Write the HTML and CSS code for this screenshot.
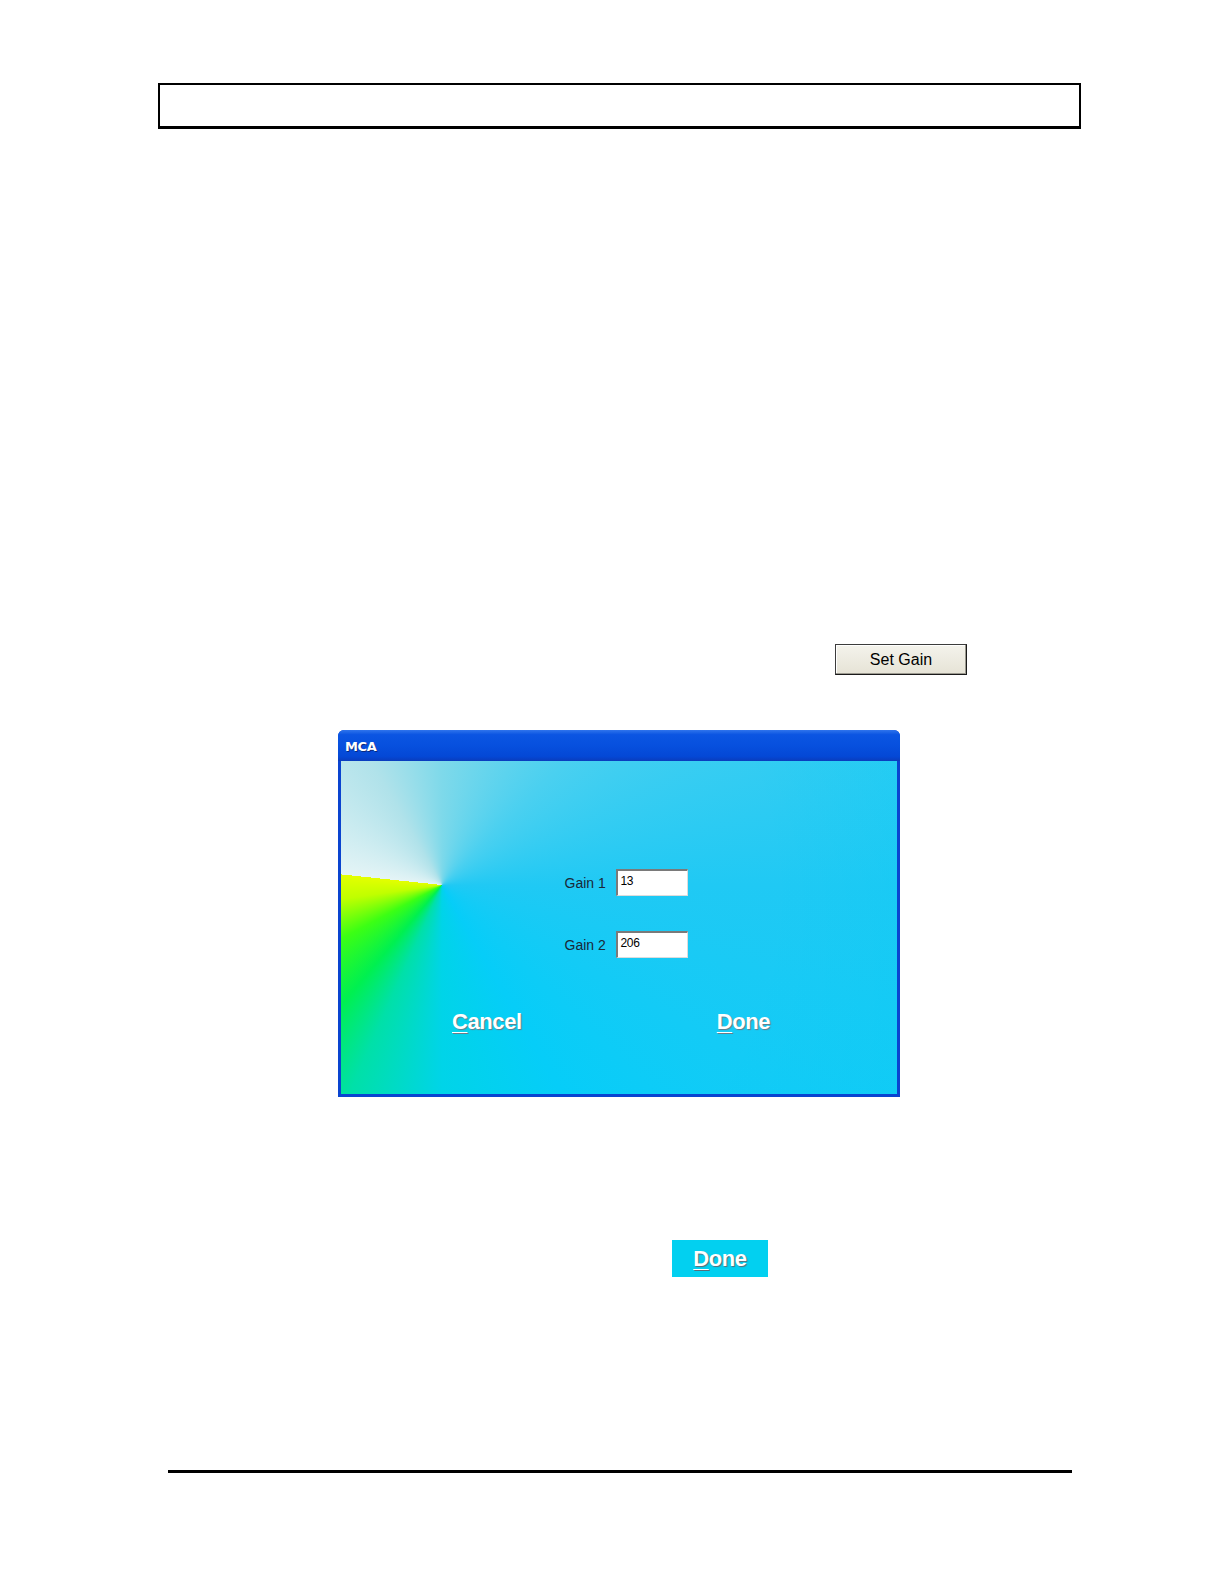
FILE: index.html
```html
<!DOCTYPE html>
<html>
<head>
<meta charset="utf-8">
<link rel="stylesheet" href="styles.css">
</head>
<body>
<div class="page">
  <div class="header-box"></div>
  <div class="setgain-row"><button class="setgain">Set Gain</button></div>
  <div class="dialog">
    <div class="titlebar">MCA</div>
    <div class="dlg-body">
      <div class="fields">
        <div class="field"><span class="lbl">Gain 1</span><span class="inp">13</span></div>
        <div class="field"><span class="lbl">Gain 2</span><span class="inp">206</span></div>
      </div>
      <div class="actions">
        <span class="act act-cancel"><u>C</u>ancel</span>
        <span class="act act-done"><u>D</u>one</span>
      </div>
    </div>
  </div>
  <div class="done-row"><span class="done-btn"><u>D</u>one</span></div>
  <div class="footer-line"></div>
</div>
</body>
</html>
```
FILE: styles.css
```css
html, body {
  margin: 0;
  padding: 0;
  background: #fff;
  overflow: hidden;
  font-family: "Liberation Sans", Arial, sans-serif;
}
.page {
  padding-top: 83px;
}
.header-box {
  margin-left: 158px;
  width: 923px;
  height: 46px;
  box-sizing: border-box;
  border: 2px solid #000;
  border-bottom-width: 3px;
}
.setgain-row {
  margin-top: 515px;
  padding-left: 835px;
  height: 31px;
}
.setgain {
  display: block;
  width: 132px;
  height: 31px;
  box-sizing: border-box;
  border: 1px solid #3c3c3c;
  border-right-color: #1a1a1a;
  border-bottom-color: #1a1a1a;
  box-shadow: inset -1px -1px 0 #9c9a90, inset 1px 1px 0 #fff;
  background: linear-gradient(#f4f3ec, #e6e3d6);
  font-family: "Liberation Sans", Arial, sans-serif;
  font-size: 16px;
  color: #000;
  padding: 0;
}
.dialog {
  margin-top: 55px;
  margin-left: 338px;
  width: 562px;
  height: 367px;
  box-sizing: border-box;
  display: flex;
  flex-direction: column;
  background: #0a44d0;
  border-radius: 6px 6px 0 0;
  padding: 0 3px 3px 3px;
}
.titlebar {
  height: 31px;
  flex: none;
  margin: 0 -3px;
  padding-left: 7px;
  border-radius: 6px 6px 0 0;
  background: linear-gradient(#2f74ec 0%, #0b55e2 15%, #0750de 50%, #0448d6 85%, #0a3cbd 100%);
  color: #fff;
  font-family: "DejaVu Sans", sans-serif;
  font-weight: bold;
  font-size: 13px;
  line-height: 34px;
  letter-spacing: -0.4px;
  text-shadow: 1px 1px 0 #0a2a80;
}
.dlg-body {
  flex: 1;
  display: flex;
  flex-direction: column;
  align-items: center;
  background:
    radial-gradient(circle at 101px 124px, rgba(0,205,245,0) 0, rgba(0,205,245,0) 330px, rgba(0,205,245,0.35) 560px),
    conic-gradient(from 276deg at 101px 124px,
      #e4f4f6 0deg,
      #b0e2ea 54deg,
      #7ed9ea 84deg,
      #4ad0f0 129deg,
      #20c9f4 174deg,
      #06cdf8 234deg,
      #00d4e8 264deg,
      #00e0a8 288deg,
      #00f050 304deg,
      #3cff14 326deg,
      #c0ff00 346deg,
      #e4ff00 360deg);
}
.fields {
  margin-top: 108px;
  margin-left: 14px;
  display: flex;
  flex-direction: column;
  gap: 35px;
}
.field {
  display: flex;
  align-items: center;
  gap: 10px;
}
.lbl {
  font-size: 14px;
  color: #1a2838;
  width: 41px;
  white-space: nowrap;
  text-align: left;
}
.inp {
  width: 72px;
  height: 27px;
  box-sizing: border-box;
  background: #fff;
  border-top: 2px solid #7a7a7a;
  border-left: 2px solid #7a7a7a;
  border-right: 1px solid #dcdcdc;
  border-bottom: 1px solid #dcdcdc;
  font-size: 12px;
  letter-spacing: -0.3px;
  color: #000;
  padding: 3px 0 0 3px;
}
.actions {
  margin-top: 51px;
  width: 100%;
  display: flex;
}
.act {
  font-size: 22px;
  font-weight: bold;
  color: #fff;
  letter-spacing: -0.4px;
  text-shadow: 1px 1px 1px #6a7c88;
}
.act u {
  text-decoration-thickness: 1px;
  text-underline-offset: 3px;
}
.act-cancel { margin-left: 111px; }
.act-done { margin-left: 195px; }
.done-row {
  margin-top: 143px;
  padding-left: 672px;
}
.done-btn {
  display: flex;
  align-items: center;
  justify-content: center;
  width: 96px;
  height: 37px;
  background: #02d0f0;
  font-size: 22px;
  font-weight: bold;
  letter-spacing: -0.4px;
  color: #fff;
  text-shadow: 1px 1px 1px #5a6c78;
}
.done-btn u {
  text-decoration-thickness: 1px;
  text-underline-offset: 3px;
}
.footer-line {
  margin-top: 193px;
  margin-left: 168px;
  width: 904px;
  height: 3px;
  background: #000;
}
```
